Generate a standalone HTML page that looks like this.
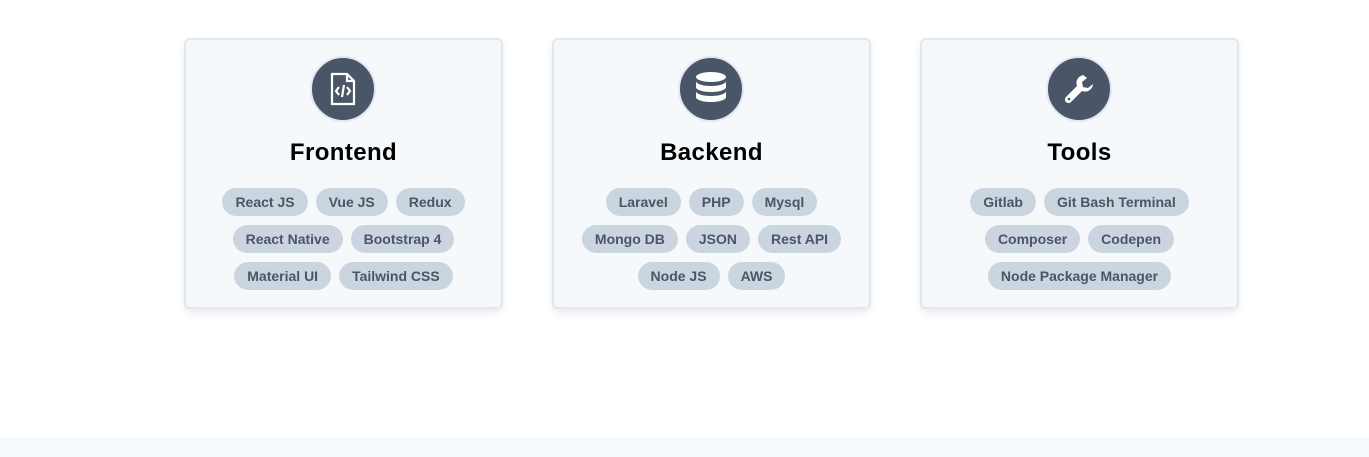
<!DOCTYPE html>
<html><head><style>
body{margin:0;width:1369px;height:457px;background:#fff;font-family:"Liberation Sans",sans-serif;position:relative;overflow:hidden}
.card{position:absolute;top:38px;width:315px;height:267px;border:2px solid #e2e8f0;border-radius:6px;background:#f6f9fc;box-shadow:0 4px 8px rgba(0,0,0,0.08);text-align:center}
.ic{position:absolute;left:124px;top:16px;width:62px;height:62px;border-radius:50%;background:#4a5568;border:2px solid #e2e8f0;display:flex;align-items:center;justify-content:center}
h2{position:absolute;top:99px;left:0;right:0;margin:0;font-size:24px;font-weight:bold;color:#000;letter-spacing:0.4px}
.tags{position:absolute;top:148px;left:14px;right:14px;display:flex;flex-wrap:wrap;justify-content:center;gap:9px 8px}
.tags span{display:inline-block;height:28px;line-height:28px;padding:0 13px;border-radius:14px;background:#cbd5e0;color:#4a5568;font-size:14px;font-weight:bold}
.strip{position:absolute;left:0;right:0;top:437px;bottom:0;background:#f7fafc}
</style></head><body>
<div class="card" style="left:184px">
 <div class="ic"><svg width="30" height="34" viewBox="0 0 30 34" fill="none" stroke="#fff" stroke-width="2.2"><path d="M4 2h15l7 7v23H4z"/><path d="M19 2v7h7"/><path d="M11 15l-3 4 3 4M19 15l3 4-3 4M16 13l-2 12"/></svg></div>
 <h2>Frontend</h2>
 <div class="tags"><span>React JS</span><span>Vue JS</span><span>Redux</span><span>React Native</span><span>Bootstrap 4</span><span>Material UI</span><span>Tailwind CSS</span></div>
</div>
<div class="card" style="left:552px">
 <div class="ic"><svg width="32" height="36" viewBox="0 0 32 36" fill="#fff"><ellipse cx="16" cy="6" rx="15" ry="5"/><path d="M1 10c0 3 7 5 15 5s15-2 15-5v6c0 3-7 5-15 5S1 19 1 16z"/><path d="M1 20c0 3 7 5 15 5s15-2 15-5v6c0 3-7 5-15 5S1 29 1 26z"/></svg></div>
 <h2>Backend</h2>
 <div class="tags"><span>Laravel</span><span>PHP</span><span>Mysql</span><span>Mongo DB</span><span>JSON</span><span>Rest API</span><span>Node JS</span><span>AWS</span></div>
</div>
<div class="card" style="left:920px">
 <div class="ic"><svg width="32" height="32" viewBox="0 0 32 32" fill="#fff"><path d="M21 2a8 8 0 0 0-7 11L3 24a3 3 0 0 0 5 5l11-11a8 8 0 0 0 11-7l-5 4-5-1-1-5 5-4a8 8 0 0 0-3-2z"/><circle cx="6" cy="26" r="1.3" fill="#4a5568"/></svg></div>
 <h2>Tools</h2>
 <div class="tags"><span>Gitlab</span><span>Git Bash Terminal</span><span>Composer</span><span>Codepen</span><span>Node Package Manager</span></div>
</div>
<div class="strip"></div>
</body></html>
